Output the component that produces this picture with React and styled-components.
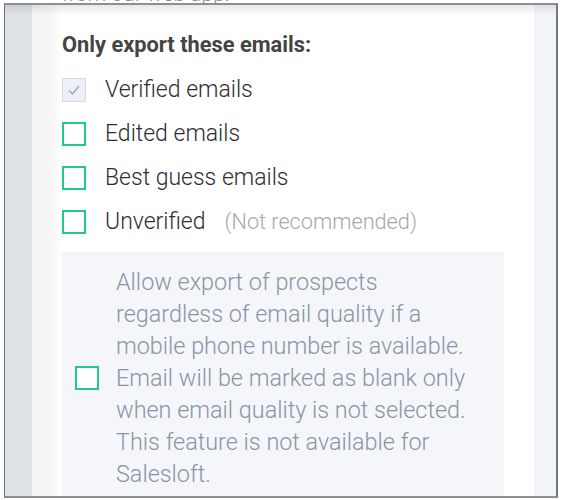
import React from 'react';
import styled, { createGlobalStyle } from 'styled-components';

const GlobalStyle = createGlobalStyle`
  html, body {
    margin: 0;
    padding: 0;
    background: #ffffff;
    font-family: Roboto, "Noto Sans", "Liberation Sans", sans-serif;
  }
`;

const colors = {
  frame: '#8d8f91',
  leftStrip: '#dfe3e7',
  rightStrip: '#f1f5f9',
  heading: '#444444',
  label: '#2e2e2e',
  hint: '#a8a8a8',
  note: '#8a94a6',
  noteBg: '#f4f6fa',
  green: '#22c98c',
};

const Snippet = styled.div`
  height: 3px;
  overflow: hidden;
  padding-left: 62px;

  span {
    display: block;
    margin-top: -16px;
    font-size: 21px;
    line-height: 20px;
    font-weight: 300;
    color: #8a8a8a;
  }
`;

const Frame = styled.div`
  margin-left: 4px;
  width: 554px;
  height: 495px;
  box-sizing: border-box;
  border-top: 2px solid ${colors.frame};
  border-left: 1px solid #6f7173;
  border-right: 2px solid #76787a;
  border-bottom: 2px solid ${colors.frame};
  display: flex;
  overflow: hidden;
  position: relative;

  &::after {
    content: '';
    position: absolute;
    left: 0;
    right: 0;
    top: 0;
    height: 10px;
    background: linear-gradient(rgba(0, 0, 0, 0.09), rgba(0, 0, 0, 0));
    pointer-events: none;
  }
`;

const Strip = styled.div`
  flex: 0 0 ${({ w }) => w}px;
  background: ${({ bg }) => bg};
`;

const Panel = styled.div`
  flex: 1;
  background: linear-gradient(90deg, #f3f3f4 0px, #f8f8f8 22px, #ffffff 30px);
  padding: 27px 30px 0 30px;
  display: flex;
  flex-direction: column;
`;

const Heading = styled.h3`
  margin: 0 0 20px 0;
  font-size: 21.8px;
  line-height: 26px;
  font-weight: 700;
  color: ${colors.heading};
`;

const OptionList = styled.div`
  display: flex;
  flex-direction: column;
  gap: 20px;
`;

const Row = styled.label`
  display: flex;
  align-items: center;
  height: 24px;
  gap: 19px;
`;

const Box = styled.span`
  flex: 0 0 24px;
  width: 24px;
  height: 24px;
  box-sizing: border-box;
  border: ${({ disabled }) => (disabled ? '1px solid #d6dae4' : `2px solid ${colors.green}`)};
  background: ${({ disabled }) => (disabled ? '#eef0f8' : '#ffffff')};
  display: flex;
  align-items: center;
  justify-content: center;
`;

const Label = styled.span`
  font-size: 23px;
  line-height: 24px;
  font-weight: 300;
  color: ${colors.label};
  white-space: nowrap;
`;

const Hint = styled.span`
  margin-left: 19px;
  font-size: 21.7px;
  color: ${colors.hint};
`;

const NoteBox = styled.div`
  margin-top: 18px;
  background: ${colors.noteBg};
  display: flex;
  align-items: center;
  gap: 17px;
  padding: 14px 0 20px 13px;
`;

const NoteText = styled.p`
  margin: 0;
  width: 370px;
  font-size: 23.4px;
  line-height: 32px;
  font-weight: 300;
  color: ${colors.note};
`;

function Checkbox({ checked, disabled }) {
  return (
    <Box disabled={disabled}>
      {checked && (
        <svg width="14" height="14" viewBox="0 0 14 14">
          <polyline points="2,7.5 5.5,11 12,3" fill="none" stroke="#a3a7b3" strokeWidth="1.4" />
        </svg>
      )}
    </Box>
  );
}

const options = [
  { label: 'Verified emails', checked: true, disabled: true },
  { label: 'Edited emails' },
  { label: 'Best guess emails' },
  { label: 'Unverified', hint: '(Not recommended)' },
];

export default function App() {
  return (
    <>
      <GlobalStyle />
      <Snippet>
        <span>from our web app.</span>
      </Snippet>
      <Frame>
        <Strip w={27} bg={colors.leftStrip} />
        <Panel>
          <Heading>Only export these emails:</Heading>
          <OptionList>
            {options.map(o => (
              <Row key={o.label}>
                <Checkbox checked={o.checked} disabled={o.disabled} />
                <Label>
                  {o.label}
                  {o.hint && <Hint>{o.hint}</Hint>}
                </Label>
              </Row>
            ))}
          </OptionList>
          <NoteBox>
            <Checkbox />
            <NoteText>
              Allow export of prospects regardless of email quality if a mobile phone number is
              available. Email will be marked as blank only when email quality is not selected.
              This feature is not available for Salesloft.
            </NoteText>
          </NoteBox>
        </Panel>
        <Strip w={22} bg={colors.rightStrip} />
      </Frame>
    </>
  );
}
